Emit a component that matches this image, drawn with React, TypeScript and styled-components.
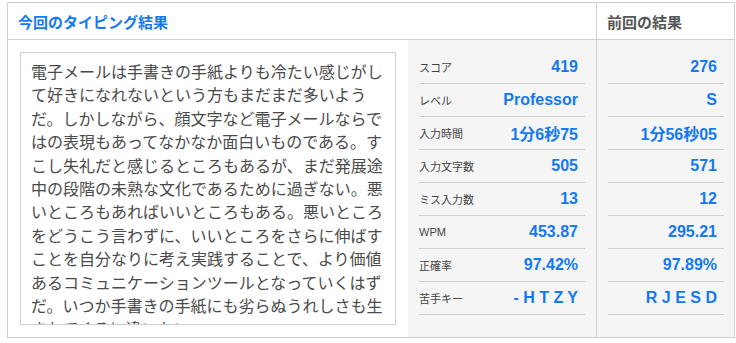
import React from "react";
import styled, { createGlobalStyle } from "styled-components";

const GlobalStyle = createGlobalStyle`
  * { box-sizing: border-box; }
  body {
    margin: 0;
    background: #fff;
    font-family: "Liberation Sans", "Noto Sans CJK JP", sans-serif;
  }
`;

const Board = styled.div`
  margin: 2px 0 0 7px;
  width: 728px;
  border: 1px solid #cfcfcf;
`;

const HeaderRow = styled.div`
  display: grid;
  grid-template-columns: 588px 1fr;
  height: 37px;
  border-bottom: 1px solid #cfcfcf;
`;

const HeaderCell = styled.div<{ $muted?: boolean }>`
  display: flex;
  align-items: center;
  padding-left: 10px;
  font-family: "Noto Sans CJK JP", sans-serif;
  font-size: 15px;
  font-weight: 700;
  color: ${(p) => (p.$muted ? "#555" : "#1479f0")};
  border-left: ${(p) => (p.$muted ? "1px solid #cfcfcf" : "none")};
`;

const BodyRow = styled.div`
  display: grid;
  grid-template-columns: 400px 188px 1fr;
  height: 297px;
`;

const TextCell = styled.div`
  padding: 12px;
  background: #fff;
`;

const TextBox = styled.div`
  height: 273px;
  border: 1px solid #cfcfcf;
  padding: 7px 10px 0 10px;
  overflow: hidden;
  font-family: "Noto Sans CJK JP", sans-serif;
  font-size: 16px;
  line-height: 23.4px;
  color: #4a4a4a;
  word-break: break-all;
`;

const StatsCell = styled.div<{ $divided?: boolean }>`
  background: #f5f5f5;
  padding: 11px ${(p) => (p.$divided ? "10px" : "11px")} 0 11px;
  border-left: ${(p) => (p.$divided ? "1px solid #cfcfcf" : "none")};
`;

const StatRow = styled.div`
  display: flex;
  align-items: center;
  justify-content: space-between;
  height: 33px;
  border-bottom: 1px solid #cfcfcf;
  padding-right: 7px;
`;

const Label = styled.span`
  font-size: 11px;
  color: #444;
`;

const Value = styled.span`
  margin-left: auto;
  font-size: 16px;
  font-weight: 700;
  color: #1479f0;
  white-space: nowrap;
`;

const passage =
  "電子メールは手書きの手紙よりも冷たい感じがして好きになれないという方もまだまだ多いようだ。しかしながら、顔文字など電子メールならではの表現もあってなかなか面白いものである。すこし失礼だと感じるところもあるが、まだ発展途中の段階の未熟な文化であるために過ぎない。悪いところもあればいいところもある。悪いところをどうこう言わずに、いいところをさらに伸ばすことを自分なりに考え実践することで、より価値あるコミュニケーションツールとなっていくはずだ。いつか手書きの手紙にも劣らぬうれしさも生まれてくるに違いない。";

const stats = [
  { label: "スコア", now: "419", prev: "276" },
  { label: "レベル", now: "Professor", prev: "S" },
  { label: "入力時間", now: "1分6秒75", prev: "1分56秒05" },
  { label: "入力文字数", now: "505", prev: "571" },
  { label: "ミス入力数", now: "13", prev: "12" },
  { label: "WPM", now: "453.87", prev: "295.21" },
  { label: "正確率", now: "97.42%", prev: "97.89%" },
  { label: "苦手キー", now: "- H T Z Y", prev: "R J E S D" },
];

export default function App() {
  return (
    <>
      <GlobalStyle />
      <Board>
        <HeaderRow>
          <HeaderCell>今回のタイピング結果</HeaderCell>
          <HeaderCell $muted>前回の結果</HeaderCell>
        </HeaderRow>
        <BodyRow>
          <TextCell>
            <TextBox>{passage}</TextBox>
          </TextCell>
          <StatsCell>
            {stats.map((s) => (
              <StatRow key={s.label}>
                <Label>{s.label}</Label>
                <Value>{s.now}</Value>
              </StatRow>
            ))}
          </StatsCell>
          <StatsCell $divided>
            {stats.map((s) => (
              <StatRow key={s.label}>
                <Value>{s.prev}</Value>
              </StatRow>
            ))}
          </StatsCell>
        </BodyRow>
      </Board>
    </>
  );
}
